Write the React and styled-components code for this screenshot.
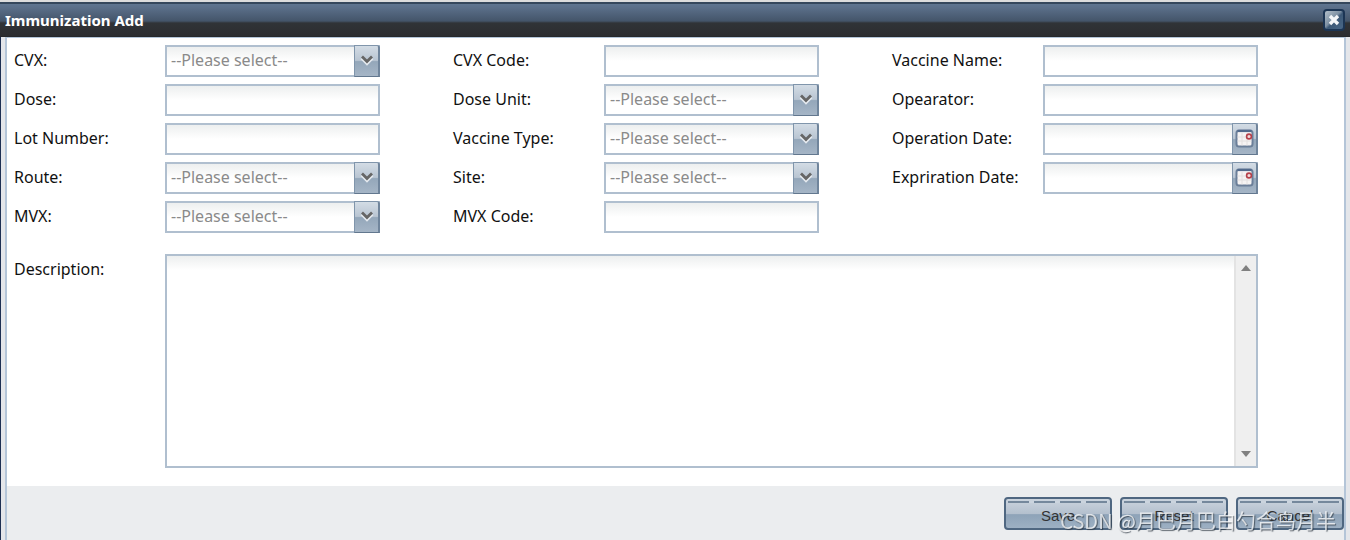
import React from 'react'
import styled, { createGlobalStyle, css } from 'styled-components'

const GlobalStyle = createGlobalStyle`
  *, *::before, *::after {
    box-sizing: border-box;
  }

  body {
    margin: 0;
    background: #dcdcdc;
    font-family: 'Noto Sans', 'DejaVu Sans Condensed', sans-serif;
    font-size: 16px;
    line-height: 20px;
    color: #111;
  }

  input, select, textarea, button {
    font: inherit;
  }
`

const Window = styled.section`
  display: flex;
  flex-direction: column;
  min-height: 100vh;
  padding-top: 2px;
`

const TitleBar = styled.header`
  display: flex;
  align-items: center;
  justify-content: space-between;
  height: 35px;
  padding: 0 5px;
  border-top: 2px solid #35475c;
  border-bottom: 1px solid #26282b;
  background: linear-gradient(#5f7590 0, #5a6e88 4px, #44556a 17px, #303337 19px, #2c2d30 100%);
`

const Title = styled.h1`
  margin: 0;
  font-size: 15px;
  line-height: 20px;
  font-weight: bold;
  color: #fff;
`

const CloseButton = styled.button`
  display: flex;
  align-items: center;
  justify-content: center;
  width: 22px;
  height: 22px;
  padding: 0;
  border: 2px solid #1c3554;
  border-radius: 4px;
  background: linear-gradient(135deg, #b4c0ca 0, #7d90a3 45%, #3c5876 55%, #4a6888 100%);
`

const Frame = styled.div`
  flex: 1;
  display: flex;
  flex-direction: column;
  padding: 0 4px;
  border-left: 1px solid #1d2f52;
  background: #e4e6ea;
`

const Panel = styled.form`
  flex: 1;
  display: flex;
  flex-direction: column;
  border: 1px solid #b4c5d8;
  border-width: 1px 2px 0;
  background: #fff;
`

const Content = styled.div`
  flex: 1;
  display: flex;
  flex-direction: column;
  gap: 21px;
  padding: 7px 86px 18px 7px;
`

const Columns = styled.div`
  display: grid;
  grid-template-columns: repeat(3, 1fr);
  gap: 73px;
`

const Column = styled.div`
  display: flex;
  flex-direction: column;
  gap: 7px;
`

const Row = styled.div`
  display: grid;
  grid-template-columns: 151px 1fr;
  flex: ${props => props.$grow ? 1 : 'none'};
`

const Label = styled.label`
  padding-top: 5px;
  white-space: nowrap;
`

const Box = styled.div`
  display: flex;
  min-width: 0;
  min-height: 32px;
  border: 2px solid #b0bfcf;
  background: linear-gradient(#edefef, #fff 14px);
`

const bare = css`
  flex: 1;
  min-width: 0;
  border: 0;
  border-radius: 0;
  background: transparent;
  outline: none;
`

const TextInput = styled.input`
  ${bare}
  padding: 0 4px;
`

const TextArea = styled.textarea`
  ${bare}
  padding: 4px;
  resize: none;
  overflow: hidden;
`

const SelectBox = styled(Box)`
  display: grid;
  grid-template-columns: 1fr 24px;
`

const Select = styled.select`
  ${bare}
  grid-area: 1 / 1 / 2 / 3;
  appearance: none;
  padding: 0 28px 2px 4px;
  color: #8a8a8a;
`

const trigger = css`
  display: flex;
  align-items: center;
  justify-content: center;
  width: 26px;
  margin: -2px -2px -2px 0;
  padding: 0;
  border: 1px solid #8095ab;
  border-right: 2px solid #70859c;
  border-bottom-color: #62778e;
  border-radius: 0 3px 0 0;
  background: linear-gradient(#d3dce5 0, #b9c5d2 48%, #94a7ba 52%, #a5b5c6 100%);
`

const SelectArrow = styled.span`
  ${trigger}
  grid-area: 1 / 2;
  pointer-events: none;
`

const DateButton = styled.button`
  ${trigger}
`

const ScrollTrack = styled.div`
  display: flex;
  flex-direction: column;
  justify-content: space-between;
  width: 22px;
  border-left: 2px solid #e3e3e3;
  background: #efefef;
`

const ScrollButton = styled.button`
  display: flex;
  align-items: center;
  justify-content: center;
  height: 24px;
  padding: 0;
  border: 0;
  background: transparent;
`

const Actions = styled.footer`
  display: flex;
  justify-content: flex-end;
  gap: 8px;
  padding: 11px 0 10px;
  background: #ebedef;
`

const ActionButton = styled.button`
  position: relative;
  width: 108px;
  height: 33px;
  padding: 4px 0 0;
  border: 2px solid #4f6781;
  border-radius: 4px;
  background: linear-gradient(#cbd4de 0, #b4c0ce 50%, #8ea3b8 54%, #9db0c3 100%);
  font-family: 'Liberation Sans', Arial, sans-serif;
  font-size: 15px;
  line-height: 20px;
  color: #333;

  &::before {
    content: '';
    position: absolute;
    top: 2px;
    left: 2px;
    right: 2px;
    height: 2px;
    background: repeating-linear-gradient(90deg, #75889c 0, #75889c 21px, #cbd4de 21px, #cbd4de 26px);
  }
`

const Watermark = styled.span`
  position: fixed;
  right: 14px;
  bottom: 4px;
  font-family: 'Noto Sans CJK SC', sans-serif;
  font-size: 20px;
  line-height: 30px;
  color: rgba(255, 255, 255, 0.75);
  text-shadow: 1px 1px 1px rgba(40, 50, 60, 0.7);
  pointer-events: none;
`

const ChevronIcon = () => (
  <svg width="14" height="12" viewBox="0 0 14 12" fill="none">
    <path d="M1.5 3.5 L7 9 L12.5 3.5" stroke="#e6ebf0" strokeWidth="2.4" />
    <path d="M2 1.5 L7 6.5 L12 1.5" stroke="#666" strokeWidth="2.8" />
  </svg>
)

const CalendarIcon = () => (
  <svg width="20" height="20" viewBox="0 0 20 20" fill="none">
    <rect x="1.5" y="1.5" width="16" height="16" rx="2.5" fill="#f5f3f3" stroke="#6b7f99" strokeWidth="2" />
    <path d="M2.5 2 H16.5" stroke="#516a8c" strokeWidth="2.2" />
    <path d="M7 4 V16.5 M12 4 V16.5 M2.5 8 H16.5 M2.5 12 H16.5" stroke="#e2dfdf" />
    <circle cx="14" cy="7.5" r="2.4" fill="#f3dada" stroke="#b5404a" strokeWidth="1.6" />
  </svg>
)

const CloseIcon = () => (
  <svg width="14" height="14" viewBox="0 0 14 14">
    <path d="M3 3 L11 11 M11 3 L3 11" stroke="#f4f6f8" strokeWidth="3.4" />
  </svg>
)

const Triangle = ({ down }) => (
  <svg width="10" height="6" viewBox="0 0 10 6">
    <path d={down ? 'M0 0 H10 L5 6 Z' : 'M0 6 H10 L5 0 Z'} fill="#808080" />
  </svg>
)

const columns = [
  [
    { id: 'cvx', label: 'CVX', type: 'select' },
    { id: 'dose', label: 'Dose' },
    { id: 'lotNumber', label: 'Lot Number' },
    { id: 'route', label: 'Route', type: 'select' },
    { id: 'mvx', label: 'MVX', type: 'select' },
  ],
  [
    { id: 'cvxCode', label: 'CVX Code' },
    { id: 'doseUnit', label: 'Dose Unit', type: 'select' },
    { id: 'vaccineType', label: 'Vaccine Type', type: 'select' },
    { id: 'site', label: 'Site', type: 'select' },
    { id: 'mvxCode', label: 'MVX Code' },
  ],
  [
    { id: 'vaccineName', label: 'Vaccine Name' },
    { id: 'operator', label: 'Opearator' },
    { id: 'operationDate', label: 'Operation Date', type: 'date' },
    { id: 'expirationDate', label: 'Expriration Date', type: 'date' },
  ],
]

const Field = ({ id, label, type }) => (
  <Row>
    <Label htmlFor={id}>{label}:</Label>
    {type === 'select' ? (
      <SelectBox>
        <Select id={id} defaultValue="">
          <option value="">--Please select--</option>
        </Select>
        <SelectArrow><ChevronIcon /></SelectArrow>
      </SelectBox>
    ) : (
      <Box>
        <TextInput id={id} type="text" />
        {type === 'date' && (
          <DateButton type="button" aria-label={`Pick ${label}`}><CalendarIcon /></DateButton>
        )}
      </Box>
    )}
  </Row>
)

const App = () => {
  return (
    <>
      <GlobalStyle />
      <Window>
        <TitleBar>
          <Title>Immunization Add</Title>
          <CloseButton type="button" aria-label="Close"><CloseIcon /></CloseButton>
        </TitleBar>
        <Frame>
          <Panel onSubmit={e => e.preventDefault()}>
            <Content>
              <Columns>
                {columns.map((fields, i) => (
                  <Column key={i}>
                    {fields.map(field => <Field key={field.id} {...field} />)}
                  </Column>
                ))}
              </Columns>
              <Row $grow>
                <Label htmlFor="description">Description:</Label>
                <Box>
                  <TextArea id="description" />
                  <ScrollTrack>
                    <ScrollButton type="button" aria-label="Scroll up"><Triangle /></ScrollButton>
                    <ScrollButton type="button" aria-label="Scroll down"><Triangle down /></ScrollButton>
                  </ScrollTrack>
                </Box>
              </Row>
            </Content>
            <Actions>
              <ActionButton type="submit">Save</ActionButton>
              <ActionButton type="reset">Reset</ActionButton>
              <ActionButton type="button">Cancel</ActionButton>
            </Actions>
          </Panel>
        </Frame>
      </Window>
      <Watermark>CSDN @月巴月巴白勺合鸟月半</Watermark>
    </>
  )
}

export default App
